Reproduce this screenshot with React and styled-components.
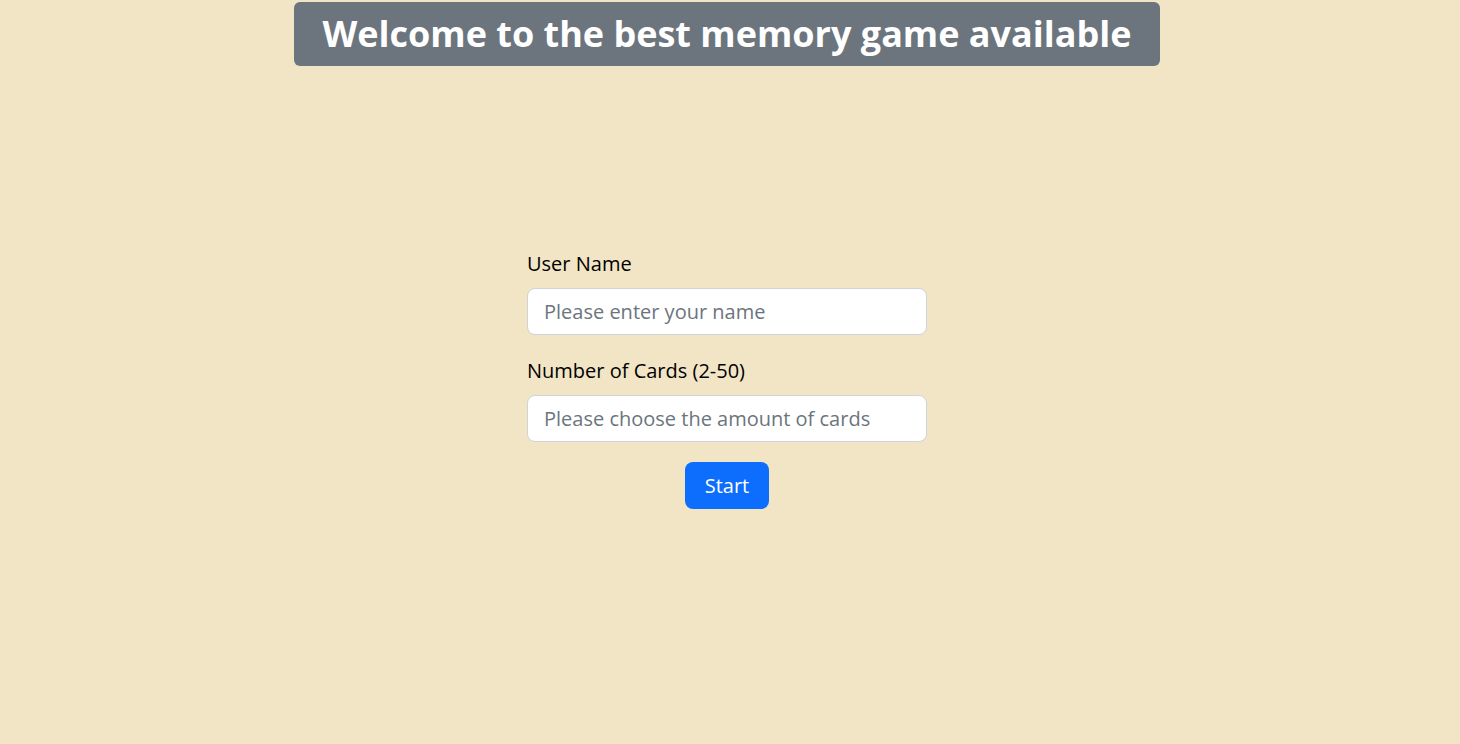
import React from "react";
import styled, { createGlobalStyle } from "styled-components";

const GlobalStyle = createGlobalStyle`
  html, body {
    margin: 0;
    padding: 0;
    background-color: #f2e5c5;
    font-family: "Comic Sans MS", "Open Sans", sans-serif;
  }
  * {
    box-sizing: border-box;
  }
`;

const Page = styled.div`
  width: 1454px;
  min-height: 744px;
  display: flex;
  flex-direction: column;
  align-items: center;
  padding-top: 2px;
`;

const Title = styled.h1`
  margin: 0;
  padding: 8px 25px;
  min-width: 866px;
  text-align: center;
  background-color: #6c757d;
  color: #fff;
  border-radius: 6px;
  font-size: 36px;
  font-weight: 700;
  line-height: 48px;
  white-space: nowrap;
`;

const Form = styled.form`
  width: 400px;
  margin-top: 183px;
  display: flex;
  flex-direction: column;
`;

const Field = styled.div`
  display: flex;
  flex-direction: column;
  margin-bottom: ${(p) => p.$gap}px;
`;

const Label = styled.label`
  font-size: 20px;
  line-height: 30px;
  color: #000;
  margin-bottom: 9px;
`;

const Input = styled.input`
  height: 47px;
  padding: 8px 16px;
  font-family: inherit;
  font-size: 20px;
  border: 1px solid #ced4da;
  border-radius: 8px;
  background: #fff;
  color: #212529;
  outline: none;
  &::placeholder {
    color: #6c757d;
  }
`;

const StartButton = styled.button`
  align-self: center;
  width: 84px;
  height: 47px;
  padding: 8px 16px;
  font-family: inherit;
  font-size: 20px;
  color: #fff;
  background-color: #0d6efd;
  border: none;
  border-radius: 8px;
  cursor: pointer;
`;

export default function App() {
  return (
    <>
      <GlobalStyle />
      <Page>
        <Title>Welcome to the best memory game available</Title>
        <Form onSubmit={(e) => e.preventDefault()}>
          <Field $gap={21}>
            <Label htmlFor="username">User Name</Label>
            <Input id="username" type="text" placeholder="Please enter your name" />
          </Field>
          <Field $gap={20}>
            <Label htmlFor="cards">Number of Cards (2-50)</Label>
            <Input id="cards" type="number" placeholder="Please choose the amount of cards" />
          </Field>
          <StartButton type="submit">Start</StartButton>
        </Form>
      </Page>
    </>
  );
}
